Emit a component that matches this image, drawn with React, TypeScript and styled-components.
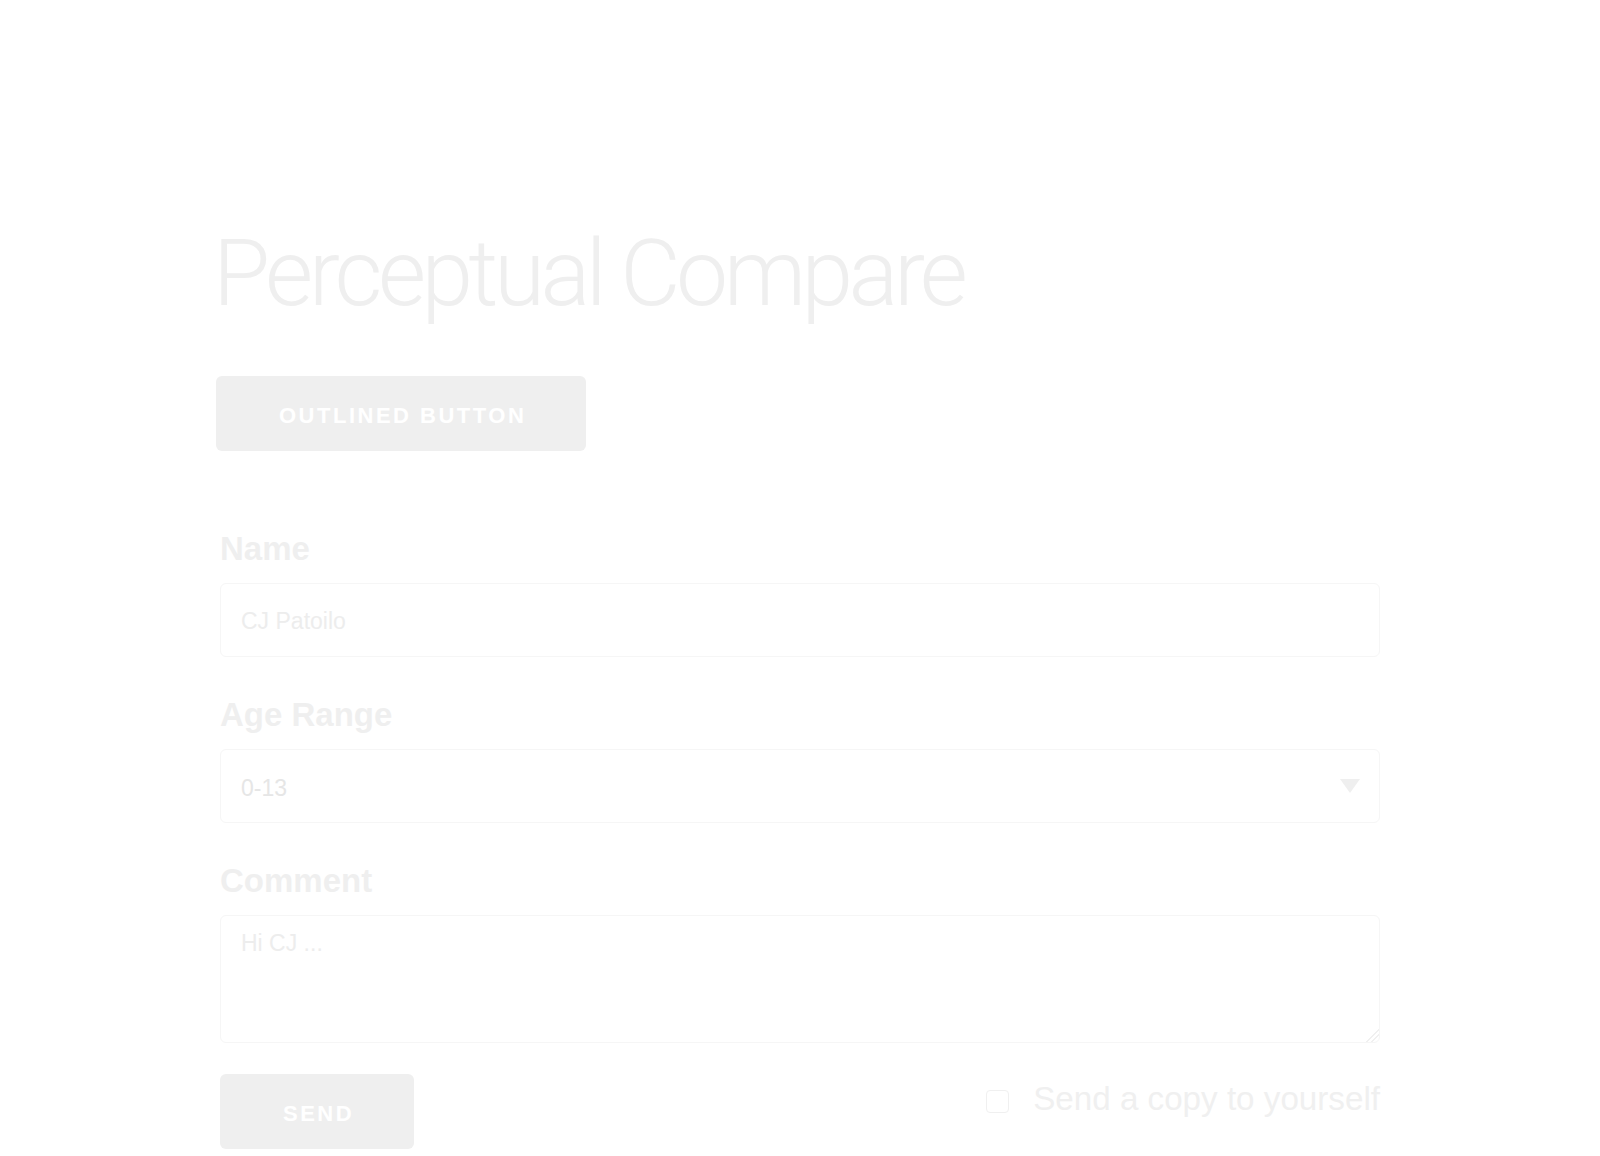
import React from "react";
import styled, { createGlobalStyle } from "styled-components";

const GlobalStyle = createGlobalStyle`
  html, body {
    margin: 0;
    padding: 0;
    background: #ffffff;
  }
  body {
    font-family: "Liberation Sans", Arial, sans-serif;
  }
  * { box-sizing: border-box; }
`;

const Page = styled.main`
  width: 1160px;
  margin: 0 auto;
  padding-top: 218px;
`;

const Title = styled.h1`
  margin: 0 0 46px -7px;
  font-family: Roboto, "Liberation Sans", sans-serif;
  font-weight: 300;
  font-size: 93px;
  line-height: 1.2;
  letter-spacing: -4.55px;
  color: #efefef;
`;

const Button = styled.button<{ $offset?: number }>`
  display: inline-flex;
  align-items: center;
  justify-content: center;
  height: 75px;
  padding: 6px 60px 0 63px;
  margin-left: ${(p) => p.$offset ?? 0}px;
  border: none;
  border-radius: 6px;
  background: #efefef;
  color: #ffffff;
  font-family: "Liberation Sans", Arial, sans-serif;
  font-weight: 700;
  font-size: 22px;
  letter-spacing: 2.5px;
  text-transform: uppercase;
  cursor: pointer;
`;

const Form = styled.form`
  display: flex;
  flex-direction: column;
  gap: 38px;
  margin-top: 78px;
`;

const Field = styled.div`
  display: flex;
  flex-direction: column;
  gap: 14px;
`;

const Label = styled.label`
  display: block;
  font-size: 33px;
  line-height: 40px;
  font-weight: 700;
  color: #efefef;
`;

const controlBase = `
  width: 100%;
  border: 1px solid #f6f6f6;
  border-radius: 6px;
  background: #ffffff;
  font-family: "Liberation Sans", Arial, sans-serif;
  font-size: 23px;
  outline: none;
`;

const TextInput = styled.input`
  ${controlBase}
  height: 74px;
  padding: 4px 20px 0;
  color: #e8e8e8;
  &::placeholder { color: #ededed; }
`;

const SelectWrap = styled.div`
  position: relative;
`;

const Select = styled.select`
  ${controlBase}
  height: 74px;
  padding: 4px 20px 0;
  color: #e6e6e6;
  appearance: none;
  -webkit-appearance: none;
`;

const Caret = styled.svg`
  position: absolute;
  right: 20px;
  top: 30px;
  width: 20px;
  height: 14px;
  pointer-events: none;
`;

const TextArea = styled.textarea`
  ${controlBase}
  height: 128px;
  padding: 14px 20px;
  line-height: 1.15;
  color: #e8e8e8;
  &::placeholder { color: #ededed; }
  &::-webkit-resizer {
    background:
      linear-gradient(135deg, transparent 0 55%, #f0f0f0 55% 62%, transparent 62% 72%, #f0f0f0 72% 79%, transparent 79%);
  }
`;

const Actions = styled.div`
  display: flex;
  justify-content: space-between;
  align-items: flex-start;
  margin-top: -7px;
`;

const CheckRow = styled.label`
  display: flex;
  align-items: flex-start;
  gap: 24px;
  margin-top: 5px;
  font-size: 33.2px;
  line-height: 40px;
  color: #f0f0f0;
`;

const CheckBox = styled.span`
  width: 23px;
  height: 23px;
  margin-top: 11px;
  border: 1px solid #f0f0f0;
  border-radius: 4px;
  background: #ffffff;
`;

export default function App() {
  return (
    <>
      <GlobalStyle />
      <Page>
        <Title>Perceptual Compare</Title>
        <Button type="button" $offset={-4}>Outlined Button</Button>
        <Form onSubmit={(e) => e.preventDefault()}>
          <Field>
            <Label htmlFor="name">Name</Label>
            <TextInput id="name" placeholder="CJ Patoilo" />
          </Field>
          <Field>
            <Label htmlFor="age">Age Range</Label>
            <SelectWrap>
              <Select id="age" defaultValue="0-13">
                <option value="0-13">0-13</option>
                <option value="14-17">14-17</option>
                <option value="18-23">18-23</option>
                <option value="24+">24+</option>
              </Select>
              <Caret viewBox="0 0 20 14" aria-hidden="true">
                <polygon points="0,0 20,0 10,14" fill="#efefef" />
              </Caret>
            </SelectWrap>
          </Field>
          <Field>
            <Label htmlFor="comment">Comment</Label>
            <TextArea id="comment" placeholder="Hi CJ ..." />
          </Field>
          <Actions>
            <Button type="submit">Send</Button>
            <CheckRow>
              <CheckBox />
              <span>Send a copy to yourself</span>
            </CheckRow>
          </Actions>
        </Form>
      </Page>
    </>
  );
}
